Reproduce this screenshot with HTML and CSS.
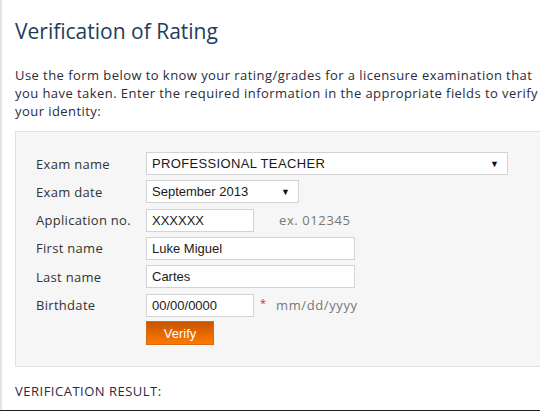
FILE: index.html
```html
<!DOCTYPE html>
<html>
<head>
<meta charset="utf-8">
<link rel="stylesheet" href="styles.css">
</head>
<body>
<div class="page">
  <h1 class="title">Verification of Rating</h1>
  <p class="intro">Use the form below to know your rating/grades for a licensure examination that you have taken. Enter the required information in the appropriate fields to verify your identity:</p>
  <div class="panel">
    <div class="form">
      <label class="lbl">Exam name</label>
      <div class="field"><div class="select select-wide"><span>PROFESSIONAL TEACHER</span><span class="arrow">▼</span></div></div>
      <label class="lbl">Exam date</label>
      <div class="field"><div class="select select-date"><span>September 2013</span><span class="arrow">▼</span></div></div>
      <label class="lbl">Application no.</label>
      <div class="field"><div class="input input-short">XXXXXX</div><span class="hint">ex. 012345</span></div>
      <label class="lbl">First name</label>
      <div class="field"><div class="input input-long">Luke Miguel</div></div>
      <label class="lbl">Last name</label>
      <div class="field"><div class="input input-long">Cartes</div></div>
      <label class="lbl">Birthdate</label>
      <div class="field"><div class="input input-short">00/00/0000</div><span class="req">*</span><span class="hint">mm/dd/yyyy</span></div>
      <span></span>
      <div class="field"><button class="btn">Verify</button></div>
    </div>
  </div>
  <div class="result">VERIFICATION RESULT:</div>
</div>
<div class="bottombar"></div>
</body>
</html>
```

FILE: styles.css
```css
html, body { margin: 0; padding: 0; background: #fff; }
body { height: 411px; overflow: hidden; position: relative; }
.page {
  border-left: 2px solid #e4e4e4;
  padding-left: 13px;
  padding-top: 1px;
  height: 410px;
  box-sizing: border-box;
  font-family: "Open Sans", "DejaVu Sans", sans-serif;
  color: #333;
}
.title {
  font-weight: normal;
  font-size: 21px;
  color: #1e3d5c;
  margin: 16px 0 0 0;
  line-height: 28px;
}
.intro {
  font-size: 13px;
  line-height: 18px;
  margin: 21px 0 0 0;
  color: #2b2b3b;
  letter-spacing: 0.44px;
}
.panel {
  margin-top: 11px;
  margin-right: -4px;
  background: #f6f6f6;
  border: 1px solid #e0e0e0;
  padding: 20px 0 21px 20px;
}
.form {
  display: grid;
  grid-template-columns: 110px auto;
  row-gap: 5.33px;
  align-items: center;
}
.lbl {
  font-size: 13px;
  color: #333;
  letter-spacing: 0.3px;
}
.field { display: flex; align-items: center; height: 23px; }
.select, .input {
  box-sizing: border-box;
  height: 23px;
  background: #fff;
  border: 1px solid #d4d4d4;
  font-family: "Liberation Sans", Arial, sans-serif;
  font-size: 13px;
  color: #1a1a1a;
  display: flex;
  align-items: center;
  padding: 0 5px;
}
.select { justify-content: space-between; padding-right: 8px; }
.select-wide { width: 362px; }
.select-wide > span:first-child { letter-spacing: 0.35px; }
.select-date { width: 153px; }
.input-short { width: 108px; }
.input-long { width: 209px; }
.arrow { font-size: 9px; color: #111; }
.hint {
  font-size: 13px;
  color: #777;
  margin-left: 25px;
  letter-spacing: 0.6px;
}
.req { color: #e0223a; font-size: 11px; margin-left: 6px; margin-top: -6px; }
.req + .hint { margin-left: 10px; }
.btn {
  box-sizing: border-box;
  width: 68px;
  height: 24px;
  border: 1px solid #d86a10;
  background: linear-gradient(#c65500, #ff7a00);
  color: #fff;
  font-family: "Liberation Sans", Arial, sans-serif;
  font-size: 13px;
  padding: 0;
}
.result {
  margin-top: 15px;
  font-size: 13px;
  color: #2b2b3b;
  letter-spacing: 0.5px;
}
.bottombar {
  position: absolute;
  left: 0; right: 0; bottom: 0;
  height: 1px;
  background: #1d2022;
}
```
